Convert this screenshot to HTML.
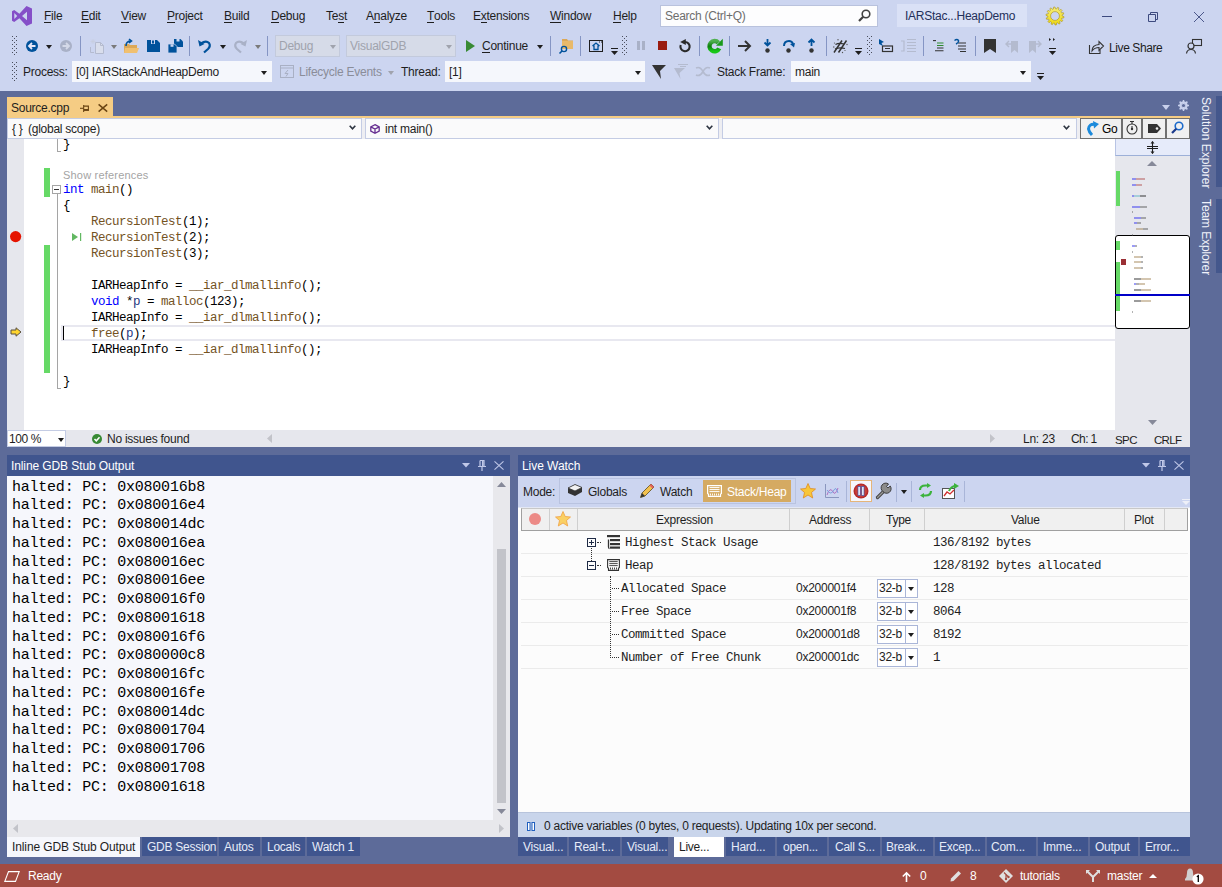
<!DOCTYPE html>
<html><head><meta charset="utf-8">
<style>
*{margin:0;padding:0;box-sizing:border-box}
html,body{width:1222px;height:887px;overflow:hidden;background:#5D6B99;font-family:"Liberation Sans",sans-serif;font-size:12px;color:#1E1E1E}
.a{position:absolute}
.t{position:absolute;white-space:nowrap;line-height:16px;letter-spacing:-0.25px}
.m{position:absolute;white-space:nowrap;font-family:"Liberation Mono",monospace;font-size:12.5px;line-height:16px;letter-spacing:-0.5px;color:#000}
u{text-decoration:none;border-bottom:1px solid currentColor;line-height:11px;display:inline-block}
svg{position:absolute;overflow:visible}
.o{position:absolute;left:12px;margin-top:1px;white-space:nowrap;font-family:"Liberation Mono",monospace;font-size:15px;line-height:18.75px;letter-spacing:-0.23px;color:#000}
.tri{width:0;height:0;border-left:3.5px solid transparent;border-right:3.5px solid transparent;border-top:4px solid #1E1E1E}
.tri.g{border-top-color:#7A7A7A}
.tri.g2{border-top-color:#A0A3AD}
.sep{width:1px;height:20px;background:#8595C4}
</style></head><body>

<!-- ===== top chrome ===== -->
<div class="a" style="left:0;top:0;width:1222px;height:91px;background:#CCD5F0"></div>

<!-- VS logo -->
<svg style="left:12px;top:6px" width="20" height="20" viewBox="0 0 20 20">
<path d="M14.5 0 L20 2.6 V17.4 L14.5 20 L7.4 12.2 L2.2 16 L0 14.8 V5.2 L2.2 4 L7.4 7.8 Z M15 5.8 L10 10 L15 14.2 Z M2.3 7 V13 L5.2 10 Z" fill="#854FC8" fill-rule="evenodd"/>
</svg>
<!-- menu -->
<div class="t" style="left:44px;top:8px"><u>F</u>ile</div>
<div class="t" style="left:81px;top:8px"><u>E</u>dit</div>
<div class="t" style="left:121px;top:8px"><u>V</u>iew</div>
<div class="t" style="left:167px;top:8px"><u>P</u>roject</div>
<div class="t" style="left:224px;top:8px"><u>B</u>uild</div>
<div class="t" style="left:271px;top:8px"><u>D</u>ebug</div>
<div class="t" style="left:326px;top:8px">Te<u>s</u>t</div>
<div class="t" style="left:366px;top:8px">A<u>n</u>alyze</div>
<div class="t" style="left:427px;top:8px"><u>T</u>ools</div>
<div class="t" style="left:473px;top:8px">E<u>x</u>tensions</div>
<div class="t" style="left:550px;top:8px"><u>W</u>indow</div>
<div class="t" style="left:613px;top:8px"><u>H</u>elp</div>

<!-- search -->
<div class="a" style="left:660px;top:5px;width:218px;height:22px;background:#FDFDFE;border:1px solid #B9C2DD"></div>
<div class="t" style="left:665px;top:8px;color:#6D6D6D">Search (Ctrl+Q)</div>
<svg style="left:858px;top:9px" width="13" height="13" viewBox="0 0 13 13"><circle cx="8" cy="5" r="3.8" fill="none" stroke="#424242" stroke-width="1.6"/><path d="M5.2 7.8 L1 12" stroke="#424242" stroke-width="2.2"/></svg>

<!-- title -->
<div class="a" style="left:897px;top:4px;width:130px;height:23px;background:#DAE1F6"></div>
<div class="t" style="left:905px;top:8px;color:#23305A">IARStac...HeapDemo</div>

<!-- gear sun -->
<svg style="left:1046px;top:7px" width="18" height="18" viewBox="0 0 18 18">
<defs><linearGradient id="gg" x1="0" y1="0" x2="0" y2="1"><stop offset="0" stop-color="#F6EE7A"/><stop offset="1" stop-color="#EED80E"/></linearGradient></defs>
<path d="M16.20 9.00 L17.98 9.61 L17.77 11.00 L15.90 11.07 L15.49 12.12 L16.83 13.44 L16.04 14.61 L14.31 13.86 L13.49 14.63 L14.13 16.40 L12.90 17.11 L11.68 15.68 L10.60 16.02 L10.41 17.89 L9.00 18.00 L8.52 16.18 L7.40 16.02 L6.41 17.62 L5.10 17.11 L5.45 15.26 L4.51 14.63 L2.93 15.64 L1.96 14.61 L3.08 13.10 L2.51 12.12 L0.65 12.35 L0.23 11.00 L1.89 10.13 L1.80 9.00 L0.02 8.39 L0.23 7.00 L2.10 6.93 L2.51 5.88 L1.17 4.56 L1.96 3.39 L3.69 4.14 L4.51 3.37 L3.87 1.60 L5.10 0.89 L6.32 2.32 L7.40 1.98 L7.59 0.11 L9.00 0.00 L9.48 1.82 L10.60 1.98 L11.59 0.38 L12.90 0.89 L12.55 2.74 L13.49 3.37 L15.07 2.36 L16.04 3.39 L14.92 4.90 L15.49 5.88 L17.35 5.65 L17.77 7.00 L16.11 7.87 Z M13.4 9 A4.4 4.4 0 1 0 4.6 9 A4.4 4.4 0 1 0 13.4 9 Z" fill="url(#gg)" fill-rule="evenodd" stroke="#A89020" stroke-width="0.6"/>
</svg>
<!-- window buttons -->
<div class="a" style="left:1102px;top:16px;width:10px;height:1px;background:#3D4A7F"></div>
<svg style="left:1148px;top:12px" width="11" height="10" viewBox="0 0 11 10"><path d="M0.5 2.5 H7.5 V9.5 H0.5 Z" fill="none" stroke="#3D4A7F" stroke-width="1"/><path d="M2.5 2.5 V0.5 H9.5 V7.5 H7.5" fill="none" stroke="#3D4A7F" stroke-width="1"/></svg>
<svg style="left:1194px;top:12px" width="10" height="10" viewBox="0 0 10 10"><path d="M0 0 L10 10 M10 0 L0 10" stroke="#3D4A7F" stroke-width="0.9"/></svg>

<!-- ===== toolbar row 1 ===== -->

<!-- grip -->
<svg style="left:12px;top:36px" width="6" height="19" viewBox="0 0 6 19"><g fill="#4A4E5C">
<rect x="0" y="0" width="1" height="1"/><rect x="4" y="0" width="1" height="1"/><rect x="2" y="2" width="1" height="1"/><rect x="0" y="4" width="1" height="1"/><rect x="4" y="4" width="1" height="1"/><rect x="2" y="6" width="1" height="1"/><rect x="0" y="8" width="1" height="1"/><rect x="4" y="8" width="1" height="1"/><rect x="2" y="10" width="1" height="1"/><rect x="0" y="12" width="1" height="1"/><rect x="4" y="12" width="1" height="1"/><rect x="2" y="14" width="1" height="1"/><rect x="0" y="16" width="1" height="1"/><rect x="4" y="16" width="1" height="1"/><rect x="2" y="18" width="1" height="1"/></g></svg>
<!-- back -->
<svg style="left:26px;top:40px" width="12" height="12" viewBox="0 0 12 12"><circle cx="6" cy="6" r="6" fill="#00529B"/><path d="M3 6 H9.5 M6 3 L3 6 L6 9" stroke="#E8E8F8" stroke-width="1.8" fill="none"/></svg>
<div class="a tri" style="left:46px;top:45px"></div>
<svg style="left:60px;top:40px" width="12" height="12" viewBox="0 0 12 12"><circle cx="6" cy="6" r="6" fill="#A9B1C7"/><path d="M9 6 H2.5 M6 3 L9 6 L6 9" stroke="#D4D9E8" stroke-width="1.8" fill="none"/></svg>
<div class="a sep" style="left:80px;top:36px"></div>
<!-- new project gray -->
<svg style="left:90px;top:39px" width="14" height="15" viewBox="0 0 14 15"><path d="M5.5 3.5 H10.5 L13.5 6.5 V14.5 H5.5 Z" fill="#D9DEEC" stroke="#B4BBCF" stroke-width="1"/><path d="M10.5 3.5 V6.5 H13.5" fill="none" stroke="#B4BBCF"/><path d="M0.5 8 V13.5 H4" fill="none" stroke="#B4BBCF"/><path d="M3 0 V5 M0.5 2.5 H5.5 M1.2 0.7 L4.8 4.3 M4.8 0.7 L1.2 4.3" stroke="#C8CEDF" stroke-width="0.8"/></svg>
<div class="a tri g" style="left:111px;top:45px"></div>
<!-- open -->
<svg style="left:124px;top:39px" width="15" height="15" viewBox="0 0 15 15"><path d="M0 5 H5 L6 6 H13 V14 H0 Z" fill="#DCA857"/><path d="M1 9 H15 L13 14 H0 Z" fill="#F0C070"/><path d="M2 7 Q2 2 7 2 M5 0 L7.5 2 L5 4" stroke="#00529B" stroke-width="1.6" fill="none"/></svg>
<!-- save -->
<svg style="left:147px;top:40px" width="13" height="12" viewBox="0 0 13 12"><path d="M0 0 H10 L13 3 V12 H0 Z" fill="#00529B"/><rect x="4" y="0" width="4" height="4" fill="#CCD5F0"/><rect x="5" y="0.5" width="2" height="3" fill="#00529B"/></svg>
<!-- save all -->
<svg style="left:168px;top:39px" width="15" height="15" viewBox="0 0 15 15"><path d="M6 0 H12.5 L15 2.5 V8 H6 Z" fill="#00529B"/><rect x="8.5" y="0" width="3" height="2.5" fill="#CCD5F0"/><path d="M0 5 H6.5 L9 7.5 V14 H0 Z" fill="#00529B" stroke="#CCD5F0" stroke-width="0.8"/><rect x="2.5" y="5.3" width="3" height="2.5" fill="#CCD5F0"/></svg>
<div class="a sep" style="left:189px;top:36px"></div>
<!-- undo -->
<svg style="left:198px;top:39px" width="14" height="14" viewBox="0 0 14 14"><path d="M3 4.5 Q8 1 11 4 Q13 7 10 10 L6 13.5" stroke="#00529B" stroke-width="2.2" fill="none"/><path d="M0 1 L1.5 7.5 L6.5 5 Z" fill="#00529B"/></svg>
<div class="a tri" style="left:220px;top:45px"></div>
<svg style="left:233px;top:39px" width="14" height="14" viewBox="0 0 14 14"><path d="M11 4.5 Q6 1 3 4 Q1 7 4 10 L8 13.5" stroke="#A9B1C7" stroke-width="2.2" fill="none"/><path d="M14 1 L12.5 7.5 L7.5 5 Z" fill="#A9B1C7"/></svg>
<div class="a tri g" style="left:255px;top:45px"></div>
<div class="a sep" style="left:267px;top:36px"></div>
<!-- combos -->
<div class="a" style="left:275px;top:35px;width:65px;height:22px;background:#D6DBE8;border:1px solid #C3CADC"></div>
<div class="t" style="left:279px;top:38px;color:#A0A3AD">Debug</div>
<div class="a tri g2" style="left:330px;top:45px"></div>
<div class="a" style="left:346px;top:35px;width:110px;height:22px;background:#D6DBE8;border:1px solid #C3CADC"></div>
<div class="t" style="left:350px;top:38px;color:#A0A3AD">VisualGDB</div>
<div class="a tri g2" style="left:446px;top:45px"></div>
<!-- continue -->
<svg style="left:466px;top:40px" width="9" height="12" viewBox="0 0 9 12"><path d="M0 0 L9 6 L0 12 Z" fill="#388A34"/></svg>
<div class="t" style="left:482px;top:38px"><u>C</u>ontinue</div>
<div class="a tri" style="left:537px;top:45px"></div>
<div class="a sep" style="left:550px;top:36px"></div>
<svg style="left:559px;top:39px" width="15" height="15" viewBox="0 0 15 15"><path d="M3 0 H8 L9 1.5 H14 V10 H3 Z" fill="#DCA857"/><path d="M3 2 H14 V10 H3 Z" fill="#E8B96A"/><circle cx="5" cy="10" r="2.6" fill="none" stroke="#00529B" stroke-width="1.4"/><path d="M3 12 L0.5 14.5" stroke="#00529B" stroke-width="1.6"/></svg>
<div class="a sep" style="left:580px;top:36px"></div>
<svg style="left:589px;top:40px" width="14" height="12" viewBox="0 0 14 12"><rect x="0.5" y="0.5" width="13" height="11" fill="none" stroke="#1E1E1E"/><path d="M3.5 6 L7 3 L10.5 6 M5 5.5 V9.5 H9 V5.5" stroke="#00529B" stroke-width="1.3" fill="none"/><rect x="10" y="1.5" width="1" height="1" fill="#1E1E1E"/><rect x="12" y="1.5" width="1" height="1" fill="#1E1E1E"/></svg>
<svg style="left:611px;top:48px" width="7" height="7" viewBox="0 0 7 7"><rect x="0" y="0" width="7" height="1" fill="#1E1E1E"/><path d="M0 3 H7 L3.5 7 Z" fill="#1E1E1E"/></svg>
<svg style="left:622px;top:36px" width="6" height="19" viewBox="0 0 6 19"><g fill="#4A4E5C"><rect x="0" y="0" width="1" height="1"/><rect x="4" y="0" width="1" height="1"/><rect x="2" y="2" width="1" height="1"/><rect x="0" y="4" width="1" height="1"/><rect x="4" y="4" width="1" height="1"/><rect x="2" y="6" width="1" height="1"/><rect x="0" y="8" width="1" height="1"/><rect x="4" y="8" width="1" height="1"/><rect x="2" y="10" width="1" height="1"/><rect x="0" y="12" width="1" height="1"/><rect x="4" y="12" width="1" height="1"/><rect x="2" y="14" width="1" height="1"/><rect x="0" y="16" width="1" height="1"/><rect x="4" y="16" width="1" height="1"/><rect x="2" y="18" width="1" height="1"/></g></svg>
<div class="a" style="left:637px;top:41px;width:3px;height:9px;background:#A9B1C7"></div>
<div class="a" style="left:642px;top:41px;width:3px;height:9px;background:#A9B1C7"></div>
<div class="a" style="left:658px;top:41px;width:9px;height:9px;background:#9A1C10"></div>
<svg style="left:679px;top:39px" width="13" height="14" viewBox="0 0 13 14"><path d="M6 3 A4.6 4.6 0 1 1 1.7 6" stroke="#2A2A2A" stroke-width="2.1" fill="none"/><path d="M1.2 3 L6.8 0 V6 Z" fill="#2A2A2A"/></svg>
<div class="a sep" style="left:699px;top:36px"></div>
<svg style="left:707px;top:38px" width="16" height="16" viewBox="0 0 16 16"><defs><linearGradient id="rg" x1="0" y1="0" x2="0" y2="1"><stop offset="0" stop-color="#4FB04F"/><stop offset="0.5" stop-color="#0E7F0E"/><stop offset="1" stop-color="#18C818"/></linearGradient></defs><path d="M12.2 10.3 A5.1 5.1 0 1 1 11.4 4.8" stroke="url(#rg)" stroke-width="4.4" fill="none"/><path d="M9 7.8 L15.8 7.8 L15.8 0.8 Z" fill="#1A9A1A"/></svg>
<div class="a sep" style="left:729px;top:36px"></div>
<svg style="left:738px;top:40px" width="14" height="12" viewBox="0 0 14 12"><path d="M0 6 H12 M7 1 L12 6 L7 11" stroke="#333" stroke-width="2" fill="none"/></svg>
<svg style="left:764px;top:39px" width="7" height="14" viewBox="0 0 7 14"><path d="M3.5 0 V6 M0.5 3.5 L3.5 6.5 L6.5 3.5" stroke="#00529B" stroke-width="1.8" fill="none"/><circle cx="3.5" cy="11.5" r="2.2" fill="#333"/></svg>
<svg style="left:783px;top:40px" width="12" height="13" viewBox="0 0 12 13"><path d="M1 6 Q1 1 6 1 Q9 1 10 4" stroke="#00529B" stroke-width="2" fill="none"/><path d="M7 4 L12 3 L11 7.5 Z" fill="#00529B"/><circle cx="5.5" cy="10.5" r="2.2" fill="#333"/></svg>
<svg style="left:808px;top:39px" width="7" height="14" viewBox="0 0 7 14"><path d="M3.5 7 V1 M0.5 3.5 L3.5 0.5 L6.5 3.5" stroke="#00529B" stroke-width="1.8" fill="none"/><circle cx="3.5" cy="11.5" r="2.2" fill="#333"/></svg>
<div class="a sep" style="left:826px;top:36px"></div>
<svg style="left:833px;top:39px" width="15" height="15" viewBox="0 0 15 15"><path d="M1 13.5 L9 1.5 M5.5 13.5 L13.5 1.5" stroke="#333" stroke-width="1.5" fill="none"/><path d="M2.5 5.5 Q6 3.5 11 5 M2 10 Q7 8 12 9.5" stroke="#333" stroke-width="1.2" fill="none"/><g fill="#555"><circle cx="5" cy="0.8" r="0.7"/><circle cx="14" cy="5.5" r="0.7"/><circle cx="0.8" cy="8" r="0.7"/><circle cx="9.5" cy="13.5" r="0.7"/><circle cx="1.5" cy="4" r="0.6"/><circle cx="12" cy="11.5" r="0.6"/></g></svg>
<svg style="left:855px;top:48px" width="7" height="7" viewBox="0 0 7 7"><rect x="0" y="0" width="7" height="1" fill="#1E1E1E"/><path d="M0 3 H7 L3.5 7 Z" fill="#1E1E1E"/></svg>
<svg style="left:867px;top:36px" width="6" height="19" viewBox="0 0 6 19"><g fill="#4A4E5C"><rect x="0" y="0" width="1" height="1"/><rect x="4" y="0" width="1" height="1"/><rect x="2" y="2" width="1" height="1"/><rect x="0" y="4" width="1" height="1"/><rect x="4" y="4" width="1" height="1"/><rect x="2" y="6" width="1" height="1"/><rect x="0" y="8" width="1" height="1"/><rect x="4" y="8" width="1" height="1"/><rect x="2" y="10" width="1" height="1"/><rect x="0" y="12" width="1" height="1"/><rect x="4" y="12" width="1" height="1"/><rect x="2" y="14" width="1" height="1"/><rect x="0" y="16" width="1" height="1"/><rect x="4" y="16" width="1" height="1"/><rect x="2" y="18" width="1" height="1"/></g></svg>
<svg style="left:879px;top:39px" width="14" height="14" viewBox="0 0 14 14"><rect x="3.5" y="7" width="10" height="5.5" fill="none" stroke="#333" stroke-width="1.2"/><path d="M6 9.5 H11" stroke="#333"/><path d="M0 0 L5 3 L2.5 4 L4 7 L0 5 Z" fill="#00529B"/></svg>
<svg style="left:901px;top:39px" width="15" height="14" viewBox="0 0 15 14"><path d="M0 2 H3 V12 H0 M6 0.5 H15 M6 3.5 H15 M6 6.5 H15 M6 9.5 H15 M6 12.5 H15" stroke="#B4BBCF" stroke-width="1.2" fill="none"/></svg>
<div class="a sep" style="left:923px;top:36px"></div>
<svg style="left:933px;top:40px" width="11" height="12" viewBox="0 0 11 12"><path d="M0 0.6 H3" stroke="#333" stroke-width="1.1"/><path d="M4 3 H10.5 M4 5.5 H10.5" stroke="#2E8B2E" stroke-width="1.1"/><path d="M4 8 H10.5 M2 10.7 H10.5" stroke="#333" stroke-width="1.1"/></svg>
<svg style="left:954px;top:39px" width="12" height="13" viewBox="0 0 12 13"><path d="M4 4 H12 M4 7 H12 M4 10 H12 M6 12.5 H12" stroke="#333" stroke-width="1.2"/><path d="M0.5 1.5 Q3 -0.5 4.5 1.5 Q5 3.5 2 5" stroke="#00529B" stroke-width="1.4" fill="none"/></svg>
<div class="a sep" style="left:975px;top:36px"></div>
<svg style="left:984px;top:39px" width="12" height="14" viewBox="0 0 12 14"><path d="M0 0 H12 V14 L6 10 L0 14 Z" fill="#333"/></svg>
<svg style="left:1006px;top:39px" width="13" height="14" viewBox="0 0 13 14"><path d="M5 2 H12 V14 L8.5 11 L5 14 Z" fill="#B4BBCF"/><path d="M0 5 H6 M3 2 L0 5 L3 8" stroke="#B4BBCF" stroke-width="1.4" fill="none"/></svg>
<svg style="left:1028px;top:39px" width="13" height="14" viewBox="0 0 13 14"><path d="M1 2 H8 V14 L4.5 11 L1 14 Z" fill="#B4BBCF"/><path d="M7 5 H13 M10 2 L13 5 L10 8" stroke="#B4BBCF" stroke-width="1.4" fill="none"/></svg>
<svg style="left:1049px;top:38px" width="7" height="17" viewBox="0 0 7 17"><path d="M0 0 L2 1.5 L0 3 Z M4 0 L6 1.5 L4 3 Z" fill="#1E1E1E"/><rect x="0" y="10" width="7" height="1" fill="#1E1E1E"/><path d="M0 13 H7 L3.5 17 Z" fill="#1E1E1E"/></svg>
<!-- live share -->
<svg style="left:1089px;top:40px" width="15" height="14" viewBox="0 0 15 14"><path d="M0.5 5 V13.5 H11 V10" stroke="#333" stroke-width="1.1" fill="none"/><path d="M3 11 Q3 5 10 4.5 V1.5 L14.5 6 L10 10.5 V7.5 Q5.5 7.5 3 11 Z" stroke="#333" stroke-width="1.1" fill="none"/></svg>
<div class="t" style="left:1109px;top:40px;letter-spacing:-0.4px">Live Share</div>
<svg style="left:1186px;top:39px" width="16" height="15" viewBox="0 0 16 15"><rect x="6.5" y="0.5" width="9" height="6" fill="none" stroke="#333" stroke-width="1.1"/><circle cx="5" cy="7" r="3" fill="#CCD5F0" stroke="#333" stroke-width="1.2"/><path d="M0.5 14.5 Q1 10.5 5 10.5 Q9 10.5 9.5 14.5" stroke="#333" stroke-width="1.2" fill="none"/></svg>


<!-- ===== toolbar row 2 ===== -->

<svg style="left:12px;top:62px" width="6" height="19" viewBox="0 0 6 19"><g fill="#4A4E5C"><rect x="0" y="0" width="1" height="1"/><rect x="4" y="0" width="1" height="1"/><rect x="2" y="2" width="1" height="1"/><rect x="0" y="4" width="1" height="1"/><rect x="4" y="4" width="1" height="1"/><rect x="2" y="6" width="1" height="1"/><rect x="0" y="8" width="1" height="1"/><rect x="4" y="8" width="1" height="1"/><rect x="2" y="10" width="1" height="1"/><rect x="0" y="12" width="1" height="1"/><rect x="4" y="12" width="1" height="1"/><rect x="2" y="14" width="1" height="1"/><rect x="0" y="16" width="1" height="1"/><rect x="4" y="16" width="1" height="1"/><rect x="2" y="18" width="1" height="1"/></g></svg>
<div class="t" style="left:23px;top:64px">Process:</div>
<div class="a" style="left:72px;top:61px;width:200px;height:21px;background:#F5F7FC"></div>
<div class="t" style="left:76px;top:64px">[0] IARStackAndHeapDemo</div>
<div class="a tri" style="left:261px;top:71px"></div>
<svg style="left:280px;top:65px" width="14" height="13" viewBox="0 0 14 13"><rect x="0.5" y="0.5" width="13" height="12" fill="none" stroke="#A9B0C4"/><path d="M0.5 3 H13.5" stroke="#A9B0C4"/><path d="M8 5 L5 8.5 H8 L6 11.5" stroke="#A9B0C4" fill="none"/></svg>
<div class="t" style="left:299px;top:64px;color:#8A8D99">Lifecycle Events</div>
<div class="a tri g2" style="left:388px;top:71px"></div>
<div class="t" style="left:401px;top:64px">Thread:</div>
<div class="a" style="left:445px;top:61px;width:200px;height:21px;background:#F5F7FC"></div>
<div class="t" style="left:449px;top:64px">[1]</div>
<div class="a tri" style="left:635px;top:71px"></div>
<svg style="left:652px;top:65px" width="14" height="14" viewBox="0 0 14 14"><path d="M0 0 H14 L8 6 L9 14 Z" fill="#333"/></svg>
<svg style="left:674px;top:64px" width="14" height="15" viewBox="0 0 14 15"><path d="M0 4 H11 L5.5 9 L6.5 15 Z" fill="#B4BBCF"/><path d="M4 0.5 H14 M6 2.5 H12" stroke="#B4BBCF"/></svg>
<svg style="left:696px;top:65px" width="14" height="13" viewBox="0 0 14 13"><path d="M0 3 Q4 1 7 6.5 Q10 12 14 10 M0 10 Q4 12 7 6.5 Q10 1 14 3" stroke="#B4BBCF" stroke-width="1.6" fill="none"/></svg>
<div class="t" style="left:717px;top:64px">Stack Frame:</div>
<div class="a" style="left:791px;top:61px;width:240px;height:21px;background:#F5F7FC"></div>
<div class="t" style="left:795px;top:64px">main</div>
<div class="a tri" style="left:1020px;top:71px"></div>
<svg style="left:1037px;top:73px" width="7" height="7" viewBox="0 0 7 7"><rect x="0" y="0" width="7" height="1" fill="#1E1E1E"/><path d="M0 3 H7 L3.5 7 Z" fill="#1E1E1E"/></svg>


<!-- ===== document well ===== -->

<!-- tab -->
<div class="a" style="left:7px;top:97px;width:106px;height:19px;background:#F5CC84"></div>
<div class="a" style="left:7px;top:116px;width:1183px;height:2px;background:#F5CC84"></div>
<div class="t" style="left:11px;top:100px">Source.cpp</div>
<svg style="left:80px;top:105px" width="9" height="7" viewBox="0 0 9 7"><path d="M0 3.3 H3.5" stroke="#6B4513" stroke-width="1.1"/><rect x="3.1" y="0" width="1.1" height="7" fill="#6B4513"/><path d="M4 1.1 H8.4 V5.1 H4" stroke="#6B4513" stroke-width="1.1" fill="none"/><rect x="4" y="4" width="4.9" height="1.8" fill="#6B4513"/></svg>
<svg style="left:98px;top:104px" width="10" height="8" viewBox="0 0 10 8"><path d="M0.6 0.4 L9.2 7.6 M9.2 0.4 L0.6 7.6" stroke="#6B4513" stroke-width="1.5"/></svg>
<!-- right doc well icons -->
<svg style="left:1162px;top:105px" width="8" height="5" viewBox="0 0 8 5"><path d="M0 0 H8 L4 5 Z" fill="#C8D0EC"/></svg>
<svg style="left:1178px;top:100px" width="11" height="11" viewBox="0 0 11 11"><circle cx="5.5" cy="5.5" r="3.3" fill="none" stroke="#C8D0EC" stroke-width="1.8"/><path d="M5.5 0 V11 M0 5.5 H11 M1.6 1.6 L9.4 9.4 M9.4 1.6 L1.6 9.4" stroke="#C8D0EC" stroke-width="1.5"/><circle cx="5.5" cy="5.5" r="1.6" fill="#5D6B99"/></svg>

<!-- nav bar -->
<div class="a" style="left:7px;top:118px;width:1183px;height:21px;background:#EEEEF2"></div>
<div class="a" style="left:7px;top:118px;width:355px;height:21px;background:#FAFAFB;border:1px solid #C4CCE4"></div>
<div class="t" style="left:12px;top:121px">{ }</div>
<div class="t" style="left:28px;top:121px">(global scope)</div>
<svg style="left:349px;top:125px" width="7" height="5" viewBox="0 0 7 5"><path d="M0.7 0.7 L3.5 3.8 L6.3 0.7" stroke="#2D3440" stroke-width="1.6" fill="none"/></svg>
<div class="a" style="left:365px;top:118px;width:354px;height:21px;background:#FAFAFB;border:1px solid #C4CCE4"></div>
<svg style="left:370px;top:124px" width="10" height="10" viewBox="0 0 10 10"><path d="M5 0.7 L9.2 2.9 V7.1 L5 9.3 L0.8 7.1 V2.9 Z M0.8 2.9 L5 5.1 L9.2 2.9 M5 5.1 V9.3" stroke="#652D90" stroke-width="1.3" fill="none"/></svg>
<div class="t" style="left:385px;top:121px">int main()</div>
<svg style="left:706px;top:125px" width="7" height="5" viewBox="0 0 7 5"><path d="M0.7 0.7 L3.5 3.8 L6.3 0.7" stroke="#2D3440" stroke-width="1.6" fill="none"/></svg>
<div class="a" style="left:722px;top:118px;width:355px;height:21px;background:#FAFAFB;border:1px solid #C4CCE4"></div>
<svg style="left:1063px;top:125px" width="7" height="5" viewBox="0 0 7 5"><path d="M0.7 0.7 L3.5 3.8 L6.3 0.7" stroke="#2D3440" stroke-width="1.6" fill="none"/></svg>
<!-- go buttons -->
<div class="a" style="left:1080px;top:118px;width:42px;height:21px;background:#F0F0F0;border:1px solid #707070"></div>
<svg style="left:1086px;top:121px" width="13" height="15" viewBox="0 0 13 15"><path d="M9 3.5 Q3 2.5 2.5 8 Q3 11 6 14" stroke="#1B8ADB" stroke-width="3" fill="none"/><path d="M7 0 L13 3 L8 7.5 Z" fill="#1B8ADB"/></svg>
<div class="t" style="left:1102px;top:121px;color:#000">Go</div>
<div class="a" style="left:1122px;top:118px;width:20px;height:21px;background:#F0F0F0;border:1px solid #707070"></div>
<svg style="left:1126px;top:121px" width="12" height="14" viewBox="0 0 12 14"><circle cx="6" cy="8" r="5" fill="none" stroke="#333" stroke-width="1.1"/><path d="M4 0.5 H8 M6 0.5 V3 M6 8 V5" stroke="#333" stroke-width="1.1"/><circle cx="6" cy="8" r="1.2" fill="#333"/></svg>
<div class="a" style="left:1142px;top:118px;width:24px;height:21px;background:#F0F0F0;border:1px solid #707070"></div>
<svg style="left:1148px;top:124px" width="13" height="9" viewBox="0 0 13 9"><path d="M0 0 H9 L13 4.5 L9 9 H0 Z" fill="#333"/><circle cx="9" cy="4.5" r="1.3" fill="#F0F0F0"/></svg>
<div class="a" style="left:1166px;top:118px;width:24px;height:21px;background:#F0F0F0;border:1px solid #707070"></div>
<svg style="left:1171px;top:121px" width="13" height="13" viewBox="0 0 13 13"><circle cx="8" cy="5" r="3.8" fill="none" stroke="#1B6ACB" stroke-width="1.6"/><path d="M5.3 7.7 L1 12" stroke="#1B3A8B" stroke-width="2.2"/></svg>

<!-- editor -->
<div class="a" style="left:7px;top:139px;width:1108px;height:291px;background:#FFFFFF"></div>
<div class="a" style="left:7px;top:139px;width:17px;height:291px;background:#E6E7ED"></div>
<div class="a" style="left:61px;top:325px;width:1054px;height:16px;border:2px solid #E8E8F0;border-right:none"></div>
<div class="a" style="left:63px;top:326px;width:1px;height:14px;background:#000"></div>
<div class="a" style="left:44px;top:168px;width:6px;height:29px;background:#66D966"></div>
<div class="a" style="left:44px;top:245px;width:6px;height:128px;background:#66D966"></div>
<div class="a" style="left:57px;top:139px;width:1px;height:13px;background:#A5A5A5"></div>
<div class="a" style="left:57px;top:151px;width:4px;height:1px;background:#A5A5A5"></div>
<div class="a" style="left:52px;top:185px;width:9px;height:9px;border:1px solid #A5A5A5;background:#fff"></div>
<div class="a" style="left:54px;top:189px;width:5px;height:1px;background:#333"></div>
<div class="a" style="left:57px;top:194px;width:1px;height:195px;background:#A5A5A5"></div>
<div class="a" style="left:57px;top:388px;width:4px;height:1px;background:#A5A5A5"></div>
<svg style="left:10px;top:231px" width="12" height="12" viewBox="0 0 12 12"><circle cx="5.6" cy="5.6" r="5.6" fill="#E51400"/></svg>
<svg style="left:72px;top:233px" width="9" height="8" viewBox="0 0 9 8"><path d="M0 0 L6 4 L0 8 Z" fill="#62B862"/><rect x="8" y="0" width="1.2" height="8" fill="#62B862"/></svg>
<svg style="left:10px;top:327px" width="12" height="10" viewBox="0 0 12 10"><path d="M1 3 H6 V0.8 L11 5 L6 9.2 V7 H1 Z" fill="#FFD52E" stroke="#5A5040" stroke-width="1"/></svg>
<div class="m" style="left:63px;top:137px">}</div>
<div class="t" style="left:63px;top:169px;font-size:11px;color:#A4A4A4;letter-spacing:0.2px;line-height:12px">Show references</div>
<div class="m" style="left:63px;top:182px"><span style="color:#0000FF">int</span> <span style="color:#74531F">main</span>()</div>
<div class="m" style="left:63px;top:198px">{</div>
<div class="m" style="left:91px;top:214px"><span style="color:#74531F">RecursionTest</span>(1);</div>
<div class="m" style="left:91px;top:230px"><span style="color:#74531F">RecursionTest</span>(2);</div>
<div class="m" style="left:91px;top:246px"><span style="color:#74531F">RecursionTest</span>(3);</div>
<div class="m" style="left:91px;top:278px">IARHeapInfo = <span style="color:#74531F">__iar_dlmallinfo</span>();</div>
<div class="m" style="left:91px;top:294px"><span style="color:#0000FF">void</span> *<span style="color:#1F377F">p</span> = <span style="color:#74531F">malloc</span>(123);</div>
<div class="m" style="left:91px;top:310px">IARHeapInfo = <span style="color:#74531F">__iar_dlmallinfo</span>();</div>
<div class="m" style="left:91px;top:326px"><span style="color:#74531F">free</span>(<span style="color:#1F377F">p</span>);</div>
<div class="m" style="left:91px;top:342px">IARHeapInfo = <span style="color:#74531F">__iar_dlmallinfo</span>();</div>
<div class="m" style="left:63px;top:374px">}</div>


<!-- minimap -->
<div class="a" style="left:1115px;top:139px;width:75px;height:291px;background:#E6E7ED"></div>
<div class="a" style="left:1115px;top:139px;width:75px;height:17px;background:#E6EBFA;border-left:1px solid #B8C4E4;border-bottom:1px solid #9DB0D8"></div>
<svg style="left:1147px;top:141px" width="11" height="13" viewBox="0 0 11 13"><path d="M0 5.5 H11 M0 7.5 H11 M5.5 0.5 V12.5" stroke="#1E1E1E" stroke-width="1.1"/><path d="M3.5 2.5 L5.5 0 L7.5 2.5 Z M3.5 10.5 L5.5 13 L7.5 10.5 Z" fill="#1E1E1E"/></svg>
<svg style="left:1147px;top:161px" width="10" height="5" viewBox="0 0 10 5"><path d="M0 5 L5 0 L10 5 Z" fill="#868999"/></svg>
<svg style="left:1148px;top:420px" width="9" height="5" viewBox="0 0 9 5"><path d="M0 0 H9 L4.5 5 Z" fill="#868999"/></svg>
<div class="a" style="left:1115px;top:235px;width:75px;height:94px;background:#fff;border:1.5px solid #000;border-radius:3px"></div>
<div class="a" style="left:1116px;top:171px;width:4px;height:35px;background:#66D966"></div>
<div class="a" style="left:1116px;top:241px;width:4px;height:9px;background:#66D966"></div>
<div class="a" style="left:1116px;top:262px;width:4px;height:49px;background:#66D966"></div>
<div class="a" style="left:1121px;top:259px;width:5px;height:6px;background:#9A2F35"></div>
<div class="a" style="left:1115px;top:294px;width:75px;height:2px;background:#0000C8"></div>
<div class="a" style="left:1132px;top:178px;width:4px;height:2px;background:#3A3AF0;opacity:0.5"></div>
<div class="a" style="left:1136px;top:178px;width:9px;height:2px;background:#B04A4A;opacity:0.45"></div>
<div class="a" style="left:1132px;top:184px;width:4px;height:2px;background:#3A3AF0;opacity:0.5"></div>
<div class="a" style="left:1136px;top:184px;width:6px;height:2px;background:#B04A4A;opacity:0.45"></div>
<div class="a" style="left:1132px;top:195px;width:2px;height:2px;background:#3A3AF0;opacity:0.5"></div>
<div class="a" style="left:1134px;top:195px;width:6px;height:2px;background:#5AB0C0;opacity:0.45"></div>
<div class="a" style="left:1140px;top:195px;width:6px;height:2px;background:#222;opacity:0.45"></div>
<div class="a" style="left:1132px;top:206px;width:8px;height:2px;background:#3A3AF0;opacity:0.5"></div>
<div class="a" style="left:1140px;top:206px;width:7px;height:2px;background:#555;opacity:0.45"></div>
<div class="a" style="left:1132px;top:211px;width:1px;height:2px;background:#555;opacity:0.45"></div>
<div class="a" style="left:1134px;top:217px;width:7px;height:2px;background:#3A3AF0;opacity:0.5"></div>
<div class="a" style="left:1141px;top:217px;width:5px;height:2px;background:#555;opacity:0.45"></div>
<div class="a" style="left:1134px;top:222px;width:3px;height:2px;background:#3A3AF0;opacity:0.5"></div>
<div class="a" style="left:1137px;top:222px;width:4px;height:2px;background:#555;opacity:0.45"></div>
<div class="a" style="left:1136px;top:228px;width:7px;height:2px;background:#A08050;opacity:0.45"></div>
<div class="a" style="left:1143px;top:228px;width:5px;height:2px;background:#555;opacity:0.45"></div>
<div class="a" style="left:1132px;top:234px;width:1px;height:2px;background:#555;opacity:0.45"></div>
<div class="a" style="left:1132px;top:245px;width:3px;height:2px;background:#3A3AF0;opacity:0.5"></div>
<div class="a" style="left:1135px;top:245px;width:2px;height:2px;background:#555;opacity:0.45"></div>
<div class="a" style="left:1132px;top:251px;width:1px;height:2px;background:#555;opacity:0.45"></div>
<div class="a" style="left:1134px;top:256px;width:7px;height:2px;background:#A08050;opacity:0.45"></div>
<div class="a" style="left:1141px;top:256px;width:2px;height:2px;background:#555;opacity:0.45"></div>
<div class="a" style="left:1134px;top:261px;width:7px;height:2px;background:#A08050;opacity:0.45"></div>
<div class="a" style="left:1141px;top:261px;width:2px;height:2px;background:#555;opacity:0.45"></div>
<div class="a" style="left:1134px;top:267px;width:7px;height:2px;background:#A08050;opacity:0.45"></div>
<div class="a" style="left:1141px;top:267px;width:2px;height:2px;background:#555;opacity:0.45"></div>
<div class="a" style="left:1134px;top:278px;width:7px;height:2px;background:#222;opacity:0.45"></div>
<div class="a" style="left:1141px;top:278px;width:10px;height:2px;background:#A08050;opacity:0.45"></div>
<div class="a" style="left:1134px;top:283px;width:2px;height:2px;background:#3A3AF0;opacity:0.5"></div>
<div class="a" style="left:1136px;top:283px;width:3px;height:2px;background:#555;opacity:0.45"></div>
<div class="a" style="left:1139px;top:283px;width:6px;height:2px;background:#A08050;opacity:0.45"></div>
<div class="a" style="left:1134px;top:289px;width:7px;height:2px;background:#222;opacity:0.45"></div>
<div class="a" style="left:1141px;top:289px;width:10px;height:2px;background:#A08050;opacity:0.45"></div>
<div class="a" style="left:1134px;top:300px;width:7px;height:2px;background:#222;opacity:0.45"></div>
<div class="a" style="left:1141px;top:300px;width:10px;height:2px;background:#A08050;opacity:0.45"></div>
<div class="a" style="left:1132px;top:311px;width:1px;height:2px;background:#555;opacity:0.45"></div>


<!-- editor bottom bar -->
<div class="a" style="left:7px;top:430px;width:1183px;height:17px;background:#E6E7ED"></div>
<div class="a" style="left:7px;top:430px;width:59px;height:17px;background:#FFFFFF;border:1px solid #C4CCE4"></div>
<div class="t" style="left:9px;top:431px;letter-spacing:-0.4px">100 %</div>
<div class="a tri" style="left:58px;top:438px"></div>
<svg style="left:92px;top:434px" width="10" height="10" viewBox="0 0 10 10"><circle cx="5" cy="5" r="5" fill="#388A34"/><path d="M2.5 5 L4.3 6.8 L7.5 3.3" stroke="#fff" stroke-width="1.5" fill="none"/></svg>
<div class="t" style="left:107px;top:431px">No issues found</div>
<svg style="left:267px;top:434px" width="5" height="9" viewBox="0 0 5 9"><path d="M5 0 V9 L0 4.5 Z" fill="#C2C3C9"/></svg>
<svg style="left:990px;top:434px" width="5" height="9" viewBox="0 0 5 9"><path d="M0 0 V9 L5 4.5 Z" fill="#C2C3C9"/></svg>
<div class="t" style="left:1023px;top:431px">Ln: 23</div>
<div class="t" style="left:1071px;top:431px;letter-spacing:-0.6px">Ch: 1</div>
<div class="t" style="left:1115px;top:432px;font-size:11.5px;letter-spacing:-0.6px">SPC</div>
<div class="t" style="left:1154px;top:432px;font-size:11.5px;letter-spacing:-0.7px">CRLF</div>

<!-- right vertical tabs -->
<div class="a" style="left:1216px;top:96px;width:6px;height:91px;background:#44578C"></div>
<div class="a" style="left:1216px;top:199px;width:6px;height:74px;background:#44578C"></div>
<div class="t" style="left:1198px;top:97px;writing-mode:vertical-rl;color:#F0F2FA;line-height:16px;letter-spacing:0">Solution Explorer</div>
<div class="t" style="left:1198px;top:199px;writing-mode:vertical-rl;color:#F0F2FA;line-height:16px;letter-spacing:-0.1px">Team Explorer</div>


<!-- ===== bottom panes ===== -->
<div class="a" style="left:7px;top:455px;width:503px;height:21px;background:#40558E"></div>
<div class="t" style="left:11px;top:458px;color:#FFFFFF;letter-spacing:-0.1px">Inline GDB Stub Output</div>
<svg style="left:462px;top:463px" width="8" height="5" viewBox="0 0 8 5"><path d="M0 0 H8 L4 4.5 Z" fill="#C0C8E8"/></svg>
<svg style="left:478px;top:460px" width="8" height="11" viewBox="0 0 8 11"><path d="M2 0.5 H6 V6.5 M2 0.5 V6.5 M0 6.5 H8 M4 6.5 V11" stroke="#C0C8E8" stroke-width="1.2" fill="none"/><rect x="4" y="1" width="1.5" height="5.5" fill="#C0C8E8"/></svg>
<svg style="left:494px;top:461px" width="10" height="9" viewBox="0 0 10 9"><path d="M0.5 0.3 L9.5 8.7 M9.5 0.3 L0.5 8.7" stroke="#C0C8E8" stroke-width="1.05"/></svg>
<div class="a" style="left:7px;top:476px;width:503px;height:344px;background:#F6F7FC"></div>
<div class="o" style="top:477.60px">halted: PC: 0x080016b8</div>
<div class="o" style="top:496.35px">halted: PC: 0x080016e4</div>
<div class="o" style="top:515.10px">halted: PC: 0x080014dc</div>
<div class="o" style="top:533.85px">halted: PC: 0x080016ea</div>
<div class="o" style="top:552.60px">halted: PC: 0x080016ec</div>
<div class="o" style="top:571.35px">halted: PC: 0x080016ee</div>
<div class="o" style="top:590.10px">halted: PC: 0x080016f0</div>
<div class="o" style="top:608.85px">halted: PC: 0x08001618</div>
<div class="o" style="top:627.60px">halted: PC: 0x080016f6</div>
<div class="o" style="top:646.35px">halted: PC: 0x080000c8</div>
<div class="o" style="top:665.10px">halted: PC: 0x080016fc</div>
<div class="o" style="top:683.85px">halted: PC: 0x080016fe</div>
<div class="o" style="top:702.60px">halted: PC: 0x080014dc</div>
<div class="o" style="top:721.35px">halted: PC: 0x08001704</div>
<div class="o" style="top:740.10px">halted: PC: 0x08001706</div>
<div class="o" style="top:758.85px">halted: PC: 0x08001708</div>
<div class="o" style="top:777.60px">halted: PC: 0x08001618</div>
<div class="a" style="left:493px;top:476px;width:17px;height:344px;background:#E8E8EC"></div>
<svg style="left:497px;top:482px" width="9" height="5" viewBox="0 0 9 5"><path d="M0 5 L4.5 0 L9 5 Z" fill="#868999"/></svg>
<div class="a" style="left:497px;top:549px;width:9px;height:254px;background:#C2C3C9"></div>
<svg style="left:497px;top:809px" width="9" height="5" viewBox="0 0 9 5"><path d="M0 0 H9 L4.5 5 Z" fill="#868999"/></svg>
<div class="a" style="left:7px;top:820px;width:503px;height:17px;background:#E8E8EC"></div>
<svg style="left:13px;top:824px" width="5" height="9" viewBox="0 0 5 9"><path d="M5 0 V9 L0 4.5 Z" fill="#C2C3C9"/></svg>
<svg style="left:499px;top:824px" width="5" height="9" viewBox="0 0 5 9"><path d="M0 0 V9 L5 4.5 Z" fill="#C2C3C9"/></svg>
<div class="a" style="left:7px;top:837px;width:133px;height:20px;background:#F6F7FC"></div>
<div class="t" style="left:12px;top:839px;letter-spacing:-0.1px">Inline GDB Stub Output</div>
<div class="a" style="left:142px;top:837px;width:75px;height:19px;background:#40558E"></div>
<div class="t" style="left:147px;top:839px;color:#E6EBF8">GDB Session</div>
<div class="a" style="left:219px;top:837px;width:41px;height:19px;background:#40558E"></div>
<div class="t" style="left:224px;top:839px;color:#E6EBF8">Autos</div>
<div class="a" style="left:262px;top:837px;width:43px;height:19px;background:#40558E"></div>
<div class="t" style="left:267px;top:839px;color:#E6EBF8">Locals</div>
<div class="a" style="left:307px;top:837px;width:53px;height:19px;background:#40558E"></div>
<div class="t" style="left:312px;top:839px;color:#E6EBF8">Watch 1</div>
<div class="a" style="left:518px;top:455px;width:672px;height:21px;background:#40558E"></div>
<div class="t" style="left:522px;top:458px;color:#FFFFFF;letter-spacing:-0.05px">Live Watch</div>
<svg style="left:1142px;top:463px" width="8" height="5" viewBox="0 0 8 5"><path d="M0 0 H8 L4 4.5 Z" fill="#C0C8E8"/></svg>
<svg style="left:1158px;top:460px" width="8" height="11" viewBox="0 0 8 11"><path d="M2 0.5 H6 V6.5 M2 0.5 V6.5 M0 6.5 H8 M4 6.5 V11" stroke="#C0C8E8" stroke-width="1.2" fill="none"/><rect x="4" y="1" width="1.5" height="5.5" fill="#C0C8E8"/></svg>
<svg style="left:1174px;top:461px" width="10" height="9" viewBox="0 0 10 9"><path d="M0.5 0.3 L9.5 8.7 M9.5 0.3 L0.5 8.7" stroke="#C0C8E8" stroke-width="1.05"/></svg>
<div class="a" style="left:518px;top:476px;width:672px;height:336px;background:#FFFFFF"></div>

<!-- live watch toolbar -->
<div class="a" style="left:518px;top:476px;width:672px;height:31px;background:#CCD5F0"></div>
<div class="t" style="left:523px;top:484px">Mode:</div>
<div class="a" style="left:559px;top:478px;width:237px;height:26px;border:1px solid #B9C3E0"></div>
<svg style="left:567px;top:483px" width="16" height="14" viewBox="0 0 16 14"><path d="M1 5 L8 1.5 L15 4.5 V9 L8 13 L1 10 Z" fill="#333"/><path d="M1 5 L8 1.5 L15 4.5 L8 8 Z" fill="#F2F2F2" stroke="#333" stroke-width="0.8"/></svg>
<div class="t" style="left:588px;top:484px">Globals</div>
<svg style="left:639px;top:483px" width="16" height="16" viewBox="0 0 16 16"><path d="M1.5 14.5 L3 10 L12 1 L15 4 L6 13 Z" fill="#F2C14E" stroke="#6B5A2A" stroke-width="0.9"/><path d="M12 1 L15 4 L13.5 5.5 L10.5 2.5 Z" fill="#E26060"/><path d="M1.5 14.5 L3 10 L6 13 Z" fill="#333"/></svg>
<div class="t" style="left:660px;top:484px">Watch</div>
<div class="a" style="left:703px;top:480px;width:88px;height:22px;background:#D5AA62"></div>
<svg style="left:707px;top:485px" width="15" height="12" viewBox="0 0 15 12"><path d="M0.6 0.6 H14.4 V8.5 L13.5 9.3 V11.4 H1.5 V9.3 L0.6 8.5 Z" fill="none" stroke="#fff" stroke-width="1.2"/><path d="M2.5 2.6 H12.5 M2.5 4.6 H12.5 M2.5 6.6 H12.5" stroke="#fff" stroke-width="1"/><path d="M3.5 8.5 V10.5 M5.5 8.5 V10.5 M7.5 8.5 V10.5 M9.5 8.5 V10.5 M11.5 8.5 V10.5" stroke="#fff" stroke-width="0.9"/></svg>
<div class="t" style="left:727px;top:484px;color:#FFFFFF">Stack/Heap</div>
<svg style="left:800px;top:483px" width="16" height="16" viewBox="0 0 16 16"><path d="M8 0.5 L10.2 5.5 L15.5 6 L11.5 9.5 L12.7 15 L8 12 L3.3 15 L4.5 9.5 L0.5 6 L5.8 5.5 Z" fill="#F8C63A" stroke="#E08A20" stroke-width="0.8"/></svg>
<svg style="left:825px;top:484px" width="14" height="14" viewBox="0 0 14 14"><path d="M0.5 0 V13.5 H14" stroke="#8A96BE" fill="none"/><path d="M2 11 Q5 2 8 8 Q10 12 13 4" stroke="#B070C0" fill="none"/><path d="M2 6 Q6 12 9 6 Q11 2 13 9" stroke="#7EA0E0" fill="none"/></svg>
<div class="a" style="left:846px;top:481px;width:1px;height:21px;background:#A9B5D8"></div>
<div class="a" style="left:850px;top:480px;width:22px;height:22px;background:#F6F7FC;border:1px solid #E5B57A"></div>
<svg style="left:853px;top:483px" width="16" height="16" viewBox="0 0 16 16"><circle cx="8" cy="8" r="7.5" fill="#B52A2A"/><circle cx="8" cy="8" r="6" fill="#C8413A"/><rect x="5" y="3.5" width="2.2" height="9" fill="#fff" stroke="#3050B0" stroke-width="0.7"/><rect x="8.8" y="3.5" width="2.2" height="9" fill="#fff" stroke="#3050B0" stroke-width="0.7"/></svg>
<svg style="left:876px;top:483px" width="15" height="16" viewBox="0 0 15 16"><path d="M1.5 14.5 L8.5 7.5" stroke="#444" stroke-width="3.2" stroke-linecap="round"/><path d="M1.5 14.5 L8.5 7.5" stroke="#9A9A9A" stroke-width="1.2" stroke-linecap="round"/><path d="M7 8.5 A4.2 4.2 0 0 1 12.5 1 L10.5 3.5 L12 5 L14.2 3 A4.2 4.2 0 0 1 7 8.5 Z" fill="#8C8C8C" stroke="#333" stroke-width="0.9"/></svg>
<div class="a" style="left:896px;top:483px;width:1px;height:19px;background:#A9B5D8"></div>
<div class="a tri" style="left:901px;top:490px"></div>
<div class="a" style="left:911px;top:481px;width:1px;height:21px;background:#A9B5D8"></div>
<svg style="left:918px;top:483px" width="15" height="15" viewBox="0 0 15 15"><path d="M2 7 Q2 2.5 7.5 2.5 H10" stroke="#3CB33C" stroke-width="2.2" fill="none"/><path d="M9 0 L13 2.5 L9 5 Z" fill="#3CB33C"/><path d="M13 8 Q13 12.5 7.5 12.5 H5" stroke="#3CB33C" stroke-width="2.2" fill="none"/><path d="M6 10 L2 12.5 L6 15 Z" fill="#3CB33C"/></svg>
<svg style="left:942px;top:483px" width="17" height="16" viewBox="0 0 17 16"><rect x="0.5" y="5.5" width="12" height="10" fill="#fff" stroke="#555"/><path d="M2 13 L5 9 L8 11 L12 7" stroke="#D03030" stroke-width="1.3" fill="none"/><path d="M7 8 Q9 3 14 3" stroke="#3CB33C" stroke-width="2" fill="none"/><path d="M12 0 L17 3 L12 6 Z" fill="#3CB33C"/></svg>
<div class="a" style="left:964px;top:481px;width:1px;height:21px;background:#A9B5D8"></div>
<svg style="left:1182px;top:499px" width="8" height="6" viewBox="0 0 8 6"><rect x="0" y="0" width="8" height="1" fill="#EEF0F8"/><path d="M0 2 H8 L4 6 Z" fill="#EEF0F8"/></svg>

<!-- grid header -->
<div class="a" style="left:518px;top:507px;width:672px;height:1px;background:#E4E8F4"></div>
<div class="a" style="left:521px;top:508px;width:667px;height:23px;background:#F0F0F0;border:1px solid #A0A0A0;border-top-color:#C8C8C8"></div>
<div class="a" style="left:549px;top:509px;width:1px;height:21px;background:#CFCFCF"></div>
<div class="a" style="left:577px;top:509px;width:1px;height:21px;background:#CFCFCF"></div>
<div class="a" style="left:789px;top:509px;width:1px;height:21px;background:#CFCFCF"></div>
<div class="a" style="left:869px;top:509px;width:1px;height:21px;background:#CFCFCF"></div>
<div class="a" style="left:924px;top:509px;width:1px;height:21px;background:#CFCFCF"></div>
<div class="a" style="left:1124px;top:509px;width:1px;height:21px;background:#CFCFCF"></div>
<div class="a" style="left:1164px;top:509px;width:1px;height:21px;background:#CFCFCF"></div>
<svg style="left:529px;top:513px" width="12" height="12" viewBox="0 0 12 12"><circle cx="6" cy="6" r="6" fill="#EC8A86"/></svg>
<svg style="left:555px;top:511px" width="16" height="16" viewBox="0 0 16 16"><path d="M8 0.5 L10.2 5.5 L15.5 6 L11.5 9.5 L12.7 15 L8 12 L3.3 15 L4.5 9.5 L0.5 6 L5.8 5.5 Z" fill="#FAD064" stroke="#F0A040" stroke-width="0.8"/></svg>
<div class="t" style="left:656px;top:512px">Expression</div>
<div class="t" style="left:809px;top:512px">Address</div>
<div class="t" style="left:886px;top:512px">Type</div>
<div class="t" style="left:1011px;top:512px">Value</div>
<div class="t" style="left:1134px;top:512px">Plot</div>
<div class="a" style="left:518px;top:531px;width:672px;height:281px;background:#FCFCFC"></div>
<div class="a" style="left:521px;top:553px;width:667px;height:1px;background:#EBEBEB"></div>
<div class="a" style="left:521px;top:576px;width:667px;height:1px;background:#EBEBEB"></div>
<div class="a" style="left:521px;top:599px;width:667px;height:1px;background:#EBEBEB"></div>
<div class="a" style="left:521px;top:622px;width:667px;height:1px;background:#EBEBEB"></div>
<div class="a" style="left:521px;top:645px;width:667px;height:1px;background:#EBEBEB"></div>
<div class="a" style="left:521px;top:668px;width:667px;height:1px;background:#EBEBEB"></div>
<div class="a" style="left:587px;top:538px;width:9px;height:9px;border:1px solid #1E2A45"></div>
<div class="a" style="left:589px;top:542px;width:5px;height:1px;background:#1E2A45"></div><div class="a" style="left:591px;top:540px;width:1px;height:5px;background:#1E2A45"></div>
<div class="a" style="left:587px;top:561px;width:9px;height:9px;border:1px solid #1E2A45"></div>
<div class="a" style="left:589px;top:565px;width:5px;height:1px;background:#1E2A45"></div>
<div class="a" style="left:591px;top:548px;width:1px;height:13px;border-left:1px dotted #333"></div>
<div class="a" style="left:597px;top:542px;width:4px;height:1px;border-top:1px dotted #333"></div>
<div class="a" style="left:597px;top:565px;width:4px;height:1px;border-top:1px dotted #333"></div>
<div class="a" style="left:610px;top:576px;width:1px;height:82px;border-left:1px dotted #333"></div>
<div class="a" style="left:612px;top:588px;width:7px;height:1px;border-top:1px dotted #333"></div>
<div class="a" style="left:612px;top:611px;width:7px;height:1px;border-top:1px dotted #333"></div>
<div class="a" style="left:612px;top:634px;width:7px;height:1px;border-top:1px dotted #333"></div>
<div class="a" style="left:612px;top:657px;width:7px;height:1px;border-top:1px dotted #333"></div>
<svg style="left:606px;top:535px" width="14" height="14" viewBox="0 0 14 14"><rect x="1" y="0" width="13" height="2.2" fill="#333"/><rect x="4" y="4" width="10" height="2.2" fill="#333"/><rect x="4" y="8" width="10" height="2.2" fill="#333"/><rect x="4" y="11.5" width="10" height="2.2" fill="#333"/><path d="M2.5 4.5 V12 Q2.5 13.5 3.5 13.5" stroke="#333" stroke-width="1.3" fill="none"/></svg>
<svg style="left:607px;top:559px" width="13" height="12" viewBox="0 0 13 12"><path d="M0.6 0.6 H12.4 V8.5 L11.5 9.3 V11.4 H1.5 V9.3 L0.6 8.5 Z" fill="none" stroke="#333" stroke-width="1.1"/><path d="M2.3 2.6 H10.7 M2.3 4.6 H10.7 M2.3 6.6 H10.7" stroke="#333" stroke-width="0.9"/><path d="M3.5 8.5 V10.5 M5.5 8.5 V10.5 M7.5 8.5 V10.5 M9.5 8.5 V10.5" stroke="#333" stroke-width="0.9"/></svg>
<div class="m" style="left:625px;top:535px;color:#1E1E1E">Highest Stack Usage</div>
<div class="m" style="left:625px;top:558px;color:#1E1E1E">Heap</div>
<div class="m" style="left:621px;top:581px;color:#1E1E1E">Allocated Space</div>
<div class="m" style="left:621px;top:604px;color:#1E1E1E">Free Space</div>
<div class="m" style="left:621px;top:627px;color:#1E1E1E">Committed Space</div>
<div class="m" style="left:621px;top:650px;color:#1E1E1E">Number of Free Chunk</div>
<div class="m" style="left:933px;top:535px;color:#1E1E1E">136/8192 bytes</div>
<div class="m" style="left:933px;top:558px;color:#1E1E1E">128/8192 bytes allocated</div>
<div class="t" style="left:796px;top:580px">0x200001f4</div>
<div class="a" style="left:877px;top:579px;width:41px;height:19px;border:1px solid #AAB6D8;background:#fff"></div>
<div class="a" style="left:905px;top:579px;width:1px;height:19px;background:#AAB6D8"></div>
<div class="t" style="left:879px;top:580px;width:24px;overflow:hidden">32-b</div>
<div class="a tri" style="left:908px;top:587px"></div>
<div class="m" style="left:933px;top:581px;color:#1E1E1E">128</div>
<div class="t" style="left:796px;top:603px">0x200001f8</div>
<div class="a" style="left:877px;top:602px;width:41px;height:19px;border:1px solid #AAB6D8;background:#fff"></div>
<div class="a" style="left:905px;top:602px;width:1px;height:19px;background:#AAB6D8"></div>
<div class="t" style="left:879px;top:603px;width:24px;overflow:hidden">32-b</div>
<div class="a tri" style="left:908px;top:610px"></div>
<div class="m" style="left:933px;top:604px;color:#1E1E1E">8064</div>
<div class="t" style="left:796px;top:626px">0x200001d8</div>
<div class="a" style="left:877px;top:625px;width:41px;height:19px;border:1px solid #AAB6D8;background:#fff"></div>
<div class="a" style="left:905px;top:625px;width:1px;height:19px;background:#AAB6D8"></div>
<div class="t" style="left:879px;top:626px;width:24px;overflow:hidden">32-b</div>
<div class="a tri" style="left:908px;top:633px"></div>
<div class="m" style="left:933px;top:627px;color:#1E1E1E">8192</div>
<div class="t" style="left:796px;top:649px">0x200001dc</div>
<div class="a" style="left:877px;top:648px;width:41px;height:19px;border:1px solid #AAB6D8;background:#fff"></div>
<div class="a" style="left:905px;top:648px;width:1px;height:19px;background:#AAB6D8"></div>
<div class="t" style="left:879px;top:649px;width:24px;overflow:hidden">32-b</div>
<div class="a tri" style="left:908px;top:656px"></div>
<div class="m" style="left:933px;top:650px;color:#1E1E1E">1</div>

<div class="a" style="left:518px;top:812px;width:672px;height:25px;background:#C9D5EB;border-top:1px solid #B8C4DC"></div>
<svg style="left:527px;top:822px" width="8" height="9" viewBox="0 0 8 9"><rect x="0.5" y="0.5" width="2.5" height="8" fill="#fff" stroke="#1F5FBF"/><rect x="5" y="0.5" width="2.5" height="8" fill="#fff" stroke="#1F5FBF"/></svg>
<div class="t" style="left:544px;top:818px">0 active variables (0 bytes, 0 requests). Updating 10x per second.</div>
<div class="a" style="left:518px;top:837px;width:49px;height:19px;background:#40558E"></div>
<div class="t" style="left:523px;top:839px;color:#E6EBF8">Visual...</div>
<div class="a" style="left:569px;top:837px;width:51px;height:19px;background:#40558E"></div>
<div class="t" style="left:574px;top:839px;color:#E6EBF8">Real-t...</div>
<div class="a" style="left:622px;top:837px;width:46px;height:19px;background:#40558E"></div>
<div class="t" style="left:627px;top:839px;color:#E6EBF8">Visual...</div>
<div class="a" style="left:674px;top:837px;width:50px;height:20px;background:#FFFFFF"></div>
<div class="t" style="left:679px;top:839px;color:#1E1E1E">Live...</div>
<div class="a" style="left:726px;top:837px;width:49px;height:19px;background:#40558E"></div>
<div class="t" style="left:731px;top:839px;color:#E6EBF8">Hard...</div>
<div class="a" style="left:777px;top:837px;width:50px;height:19px;background:#40558E"></div>
<div class="t" style="left:783px;top:839px;color:#E6EBF8">open...</div>
<div class="a" style="left:829px;top:837px;width:51px;height:19px;background:#40558E"></div>
<div class="t" style="left:835px;top:839px;color:#E6EBF8">Call S...</div>
<div class="a" style="left:882px;top:837px;width:51px;height:19px;background:#40558E"></div>
<div class="t" style="left:886px;top:839px;color:#E6EBF8">Break...</div>
<div class="a" style="left:935px;top:837px;width:50px;height:19px;background:#40558E"></div>
<div class="t" style="left:939px;top:839px;color:#E6EBF8">Excep...</div>
<div class="a" style="left:987px;top:837px;width:49px;height:19px;background:#40558E"></div>
<div class="t" style="left:991px;top:839px;color:#E6EBF8">Com...</div>
<div class="a" style="left:1038px;top:837px;width:50px;height:19px;background:#40558E"></div>
<div class="t" style="left:1043px;top:839px;color:#E6EBF8">Imme...</div>
<div class="a" style="left:1090px;top:837px;width:48px;height:19px;background:#40558E"></div>
<div class="t" style="left:1095px;top:839px;color:#E6EBF8">Output</div>
<div class="a" style="left:1140px;top:837px;width:50px;height:19px;background:#40558E"></div>
<div class="t" style="left:1145px;top:839px;color:#E6EBF8">Error...</div>


<!-- ===== status bar ===== -->
<div class="a" style="left:0;top:864px;width:1222px;height:23px;background:#A34B41"></div>
<svg style="left:4px;top:871px" width="16" height="11" viewBox="0 0 16 11"><path d="M4.5 0.6 H15.2 L11.5 10.4 H0.8 Z" fill="none" stroke="#fff" stroke-width="1.1"/></svg>
<div class="t" style="left:28px;top:868px;color:#fff">Ready</div>
<svg style="left:902px;top:872px" width="9" height="10" viewBox="0 0 9 10"><path d="M4.5 10 V1 M0.8 4.5 L4.5 0.8 L8.2 4.5" stroke="#fff" stroke-width="1.6" fill="none"/></svg>
<div class="t" style="left:920px;top:868px;color:#fff">0</div>
<svg style="left:950px;top:870px" width="12" height="12" viewBox="0 0 12 12"><path d="M1 8.5 L8.5 1 L11 3.5 L3.5 11 L0.5 11.5 Z" fill="#E0E0E0"/></svg>
<div class="t" style="left:970px;top:868px;color:#fff">8</div>
<svg style="left:999px;top:869px" width="14" height="14" viewBox="0 0 14 14"><path d="M7 0 L14 7 L7 14 L0 7 Z" fill="#E0E0E0"/><path d="M5 3.5 L7 5.5 V10 M7 5.5 L9.5 8" stroke="#A34B41" stroke-width="1.2" fill="none"/><circle cx="7" cy="10" r="1.2" fill="#A34B41"/><circle cx="9.5" cy="8" r="1.2" fill="#A34B41"/></svg>
<div class="t" style="left:1020px;top:868px;color:#fff">tutorials</div>
<svg style="left:1086px;top:870px" width="14" height="12" viewBox="0 0 14 12"><path d="M1 1 L7 7 L13 1 M7 7 V12" stroke="#E0E0E0" stroke-width="2" fill="none"/><path d="M0 0 H4 L0 4 Z M14 0 H10 L14 4 Z" fill="#E0E0E0"/></svg>
<div class="t" style="left:1107px;top:868px;color:#fff">master</div>
<svg style="left:1149px;top:874px" width="8" height="4" viewBox="0 0 8 4"><path d="M0 4 L4 0 L8 4 Z" fill="#fff"/></svg>
<svg style="left:1184px;top:868px" width="20" height="17" viewBox="0 0 20 17"><path d="M1 11 Q3 9 3 5 Q3 0.5 6 0.5 Q9 0.5 9 5 Q9 9 11 11 V12.5 H1 Z" fill="#D0D0D0"/><circle cx="14" cy="11" r="5.6" fill="#fff"/><path d="M12.8 8.8 L14.3 7.8 V14" stroke="#000" stroke-width="1.3" fill="none"/></svg>


</body></html>
